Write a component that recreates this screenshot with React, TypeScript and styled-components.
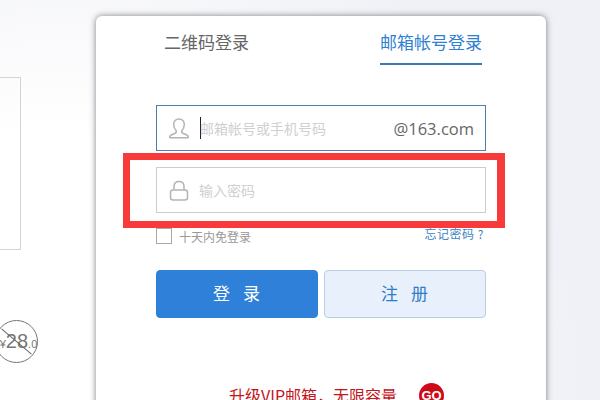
import React from "react"
import styled, { createGlobalStyle } from "styled-components"

const GlobalStyle = createGlobalStyle`
  html, body {
    margin: 0;
    height: 400px;
    overflow: hidden;
  }
  body {
    font-family: "Noto Sans CJK SC", "Liberation Sans", sans-serif;
  }
`

const Page = styled.div`
  position: relative;
  display: flex;
  width: 600px;
  height: 400px;
  overflow: hidden;
  background: radial-gradient(circle at 10% 100%, #ffffff 40%, #f0f1f6 78%);
`

const Promo = styled.aside`
  flex: 0 0 96px;
  display: flex;
  flex-direction: column;
  overflow: hidden;
`

const PromoBox = styled.div`
  flex: none;
  width: 41px;
  height: 173px;
  margin: 77px 0 0 -20px;
  border: 1px solid #d4d4d4;
  box-sizing: border-box;
`

const PriceStamp = styled.div`
  position: relative;
  flex: none;
  width: 43px;
  height: 43px;
  margin: 70px 0 0 -5px;
  padding-left: 4px;
  display: flex;
  align-items: baseline;
  justify-content: center;
  box-sizing: border-box;
  border: 1px solid #777;
  border-radius: 50%;
  color: #777;
  font-family: "Liberation Sans", sans-serif;
  line-height: 41px;

  &::after {
    content: "";
    position: absolute;
    left: 1px;
    top: 20px;
    width: 39px;
    height: 1px;
    background: #666;
    transform: rotate(40deg);
  }
`

const PriceSmall = styled.span`
  font-size: 11px;
`

const PriceBig = styled.span`
  font-size: 20px;
`

const Card = styled.main`
  flex: 0 0 450px;
  height: 420px;
  margin-top: 16px;
  padding: 0 60px;
  box-sizing: border-box;
  background: #fff;
  border-radius: 6px 6px 0 0;
  box-shadow: 0 0 6px rgba(60, 60, 70, 0.65);
`

const Tabs = styled.nav`
  display: flex;
  justify-content: space-between;
  height: 89px;
  padding-left: 8px;
  font-size: 17px;
`

const Tab = styled.div<{ $active?: boolean }>`
  height: 34px;
  padding-top: 13px;
  margin-right: 4px;
  line-height: 25px;
  color: ${props => (props.$active ? "#2f80d0" : "#666")};
  border-bottom: 2px solid ${props => (props.$active ? "#3d78b4" : "transparent")};
`

const Field = styled.div<{ $focused?: boolean }>`
  display: flex;
  align-items: center;
  width: 330px;
  height: 46px;
  margin-bottom: 16px;
  padding: 0 11px 0 10px;
  box-sizing: border-box;
  border: 1px solid ${props => (props.$focused ? "#4a80ad" : "#c8ced6")};
  background: #fff;
`

const FieldIcon = styled.svg`
  flex: none;
  width: 24px;
  height: 24px;
  fill: none;
  stroke: #b4b4b4;
  stroke-width: 1.5;
`

const Caret = styled.span`
  flex: none;
  width: 1px;
  height: 22px;
  margin: 0 -1px 0 9px;
  background: #222;
`

const Placeholder = styled.span<{ $indent?: boolean }>`
  flex: 1;
  margin-left: ${props => (props.$indent ? "8px" : "0")};
  font-size: 14px;
  color: #d0d0d0;
`

const Domain = styled.span`
  font-family: "Open Sans", sans-serif;
  font-size: 16.5px;
  color: #666;
`

const Options = styled.div`
  display: flex;
  align-items: center;
  justify-content: space-between;
  width: 328px;
  height: 16px;
  margin: -1px 0 26px;
  font-size: 12px;
`

const Remember = styled.label`
  display: flex;
  align-items: center;
  gap: 7px;
  color: #999;
`

const CheckBox = styled.span`
  width: 16px;
  height: 16px;
  box-sizing: border-box;
  border: 1px solid #aaa;
`

const ForgotLink = styled.a`
  position: relative;
  top: -3px;
  color: #3f82c4;
  letter-spacing: 0.5px;
  white-space: pre;
`

const Buttons = styled.div`
  display: flex;
  gap: 6px;
  width: 330px;
`

const Button = styled.button<{ $primary?: boolean }>`
  flex: 0 0 162px;
  height: 48px;
  padding: 0 0 3px;
  font-family: inherit;
  font-size: 17px;
  letter-spacing: 13px;
  text-indent: 12px;
  border-radius: 4px;
  border: 1px solid ${props => (props.$primary ? "#2f80d8" : "#b9cfe6")};
  background: ${props => (props.$primary ? "#2f80d8" : "#e8f1fb")};
  color: ${props => (props.$primary ? "#fff" : "#2f7cc8")};
`

const Upsell = styled.div`
  display: flex;
  align-items: center;
  gap: 22px;
  margin: 64px 0 0 73px;
  height: 26px;
`

const UpsellText = styled.span`
  font-size: 16px;
  color: #c4141c;
  white-space: nowrap;
`

const GoBadge = styled.span`
  flex: none;
  width: 25px;
  height: 25px;
  border-radius: 50%;
  background: #cf0a18;
  color: #fff;
  font-family: "Liberation Sans", sans-serif;
  font-size: 13px;
  font-weight: 700;
  line-height: 25px;
  text-align: center;
`

const Highlight = styled.div`
  position: absolute;
  left: 123px;
  top: 153px;
  width: 382px;
  height: 75px;
  box-sizing: border-box;
  border: 7px solid #f83a3a;
  border-right-width: 8px;
  pointer-events: none;
`

const App = (): JSX.Element => (
  <Page>
    <GlobalStyle />
    <Promo>
      <PromoBox />
      <PriceStamp>
        <PriceSmall>¥</PriceSmall>
        <PriceBig>28</PriceBig>
        <PriceSmall>.0</PriceSmall>
      </PriceStamp>
    </Promo>
    <Card>
      <Tabs>
        <Tab>二维码登录</Tab>
        <Tab $active>邮箱帐号登录</Tab>
      </Tabs>
      <Field $focused>
        <FieldIcon viewBox="0 0 24 24">
          <path d="M12 3c-3.4 0-5.3 2.4-5.3 5.6 0 2.4 1 4.6 2.5 6 .4 1.6-.1 2.4-1.6 3-2.2.8-4.6 1.5-4.9 3.1-.1.6.2 1 .8 1h17c.6 0 .9-.4.8-1-.3-1.6-2.7-2.3-4.9-3.1-1.5-.6-2-1.4-1.6-3 1.5-1.4 2.5-3.6 2.5-6C17.3 5.4 15.4 3 12 3z" />
        </FieldIcon>
        <Caret />
        <Placeholder>邮箱帐号或手机号码</Placeholder>
        <Domain>@163.com</Domain>
      </Field>
      <Field>
        <FieldIcon viewBox="0 0 24 24">
          <path d="M7 12V8.500C7 5.500 9 3.500 12 3.500s5 2 5 5V12" />
          <rect x="3.500" y="12" width="17" height="10" rx="2.500" />
        </FieldIcon>
        <Placeholder $indent>输入密码</Placeholder>
      </Field>
      <Options>
        <Remember>
          <CheckBox />
          十天内免登录
        </Remember>
        <ForgotLink>忘记密码 ?</ForgotLink>
      </Options>
      <Buttons>
        <Button $primary>登录</Button>
        <Button>注册</Button>
      </Buttons>
      <Upsell>
        <UpsellText>升级VIP邮箱，无限容量</UpsellText>
        <GoBadge>GO</GoBadge>
      </Upsell>
    </Card>
    <Highlight />
  </Page>
)

export default App
